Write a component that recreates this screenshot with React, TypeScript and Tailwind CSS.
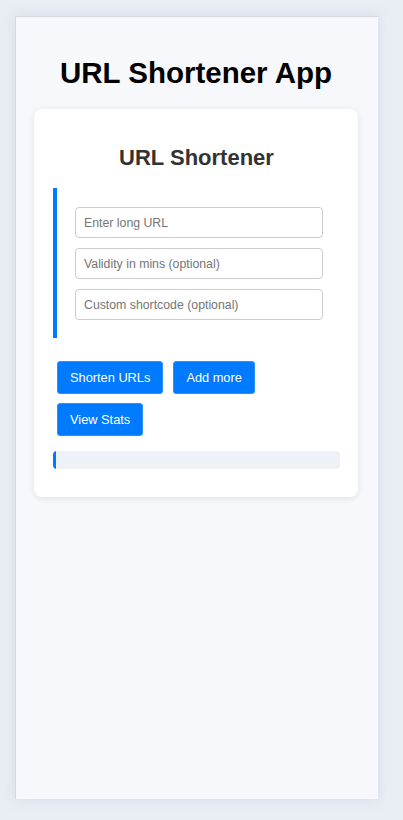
import React from "react";

export default function App() {
  return (
    <div
      className="h-[820px] w-full bg-[#e9edf4] pt-[16px] pl-[15px]"
      style={{ fontFamily: '"Liberation Sans", Arial, sans-serif' }}
    >
      <div className="w-[363px] h-[783px] bg-[#f7f8fc] border-l border-t border-[#d6d9e0] shadow-[0_0_12px_rgba(180,190,210,0.35)] flex flex-col items-center pt-[39px] pr-[2px]">
        <h1 className="text-[29.5px] font-bold text-black leading-[33px]">URL Shortener App</h1>
        <div className="mt-[20px] w-[324px] bg-white rounded-[8px] shadow-[0_1px_6px_rgba(0,0,0,0.1)] pl-[19px] pr-[18px] pt-[36px] pb-[28px]">
          <h2 className="text-[22px] font-bold text-[#333] text-center leading-[25px]">URL Shortener</h2>
          <div className="mt-[18px] border-l-[4px] border-[#007bff] pl-[18px] pr-[17px] pt-[19px] pb-[18px] flex flex-col gap-[10px]">
            <input
              placeholder="Enter long URL"
              className="h-[31px] w-full border border-[#ccc] rounded-[4px] px-[8px] text-[12.3px] placeholder:text-[#757575] outline-none"
            />
            <input
              placeholder="Validity in mins (optional)"
              className="h-[31px] w-full border border-[#ccc] rounded-[4px] px-[8px] text-[12.3px] placeholder:text-[#757575] outline-none"
            />
            <input
              placeholder="Custom shortcode (optional)"
              className="h-[31px] w-full border border-[#ccc] rounded-[4px] px-[8px] text-[12.3px] placeholder:text-[#757575] outline-none"
            />
          </div>
          <div className="mt-[23px] pl-[4px] flex flex-wrap gap-x-[10px] gap-y-[9px]">
            <button className="h-[33px] px-[12px] bg-[#007bff] text-white text-[12.8px] rounded-[3px] border border-[#2f8fff]">
              Shorten URLs
            </button>
            <button className="h-[33px] px-[12px] bg-[#007bff] text-white text-[12.8px] rounded-[3px] border border-[#2f8fff]">
              Add more
            </button>
            <button className="h-[33px] px-[12px] bg-[#007bff] text-white text-[12.8px] rounded-[3px] border border-[#2f8fff]">
              View Stats
            </button>
          </div>
          <div className="mt-[15px] h-[18px] w-full bg-[#eef2f6] rounded-[4px] overflow-hidden flex">
            <div className="w-[3px] h-full bg-[#007bff]" />
          </div>
        </div>
      </div>
    </div>
  );
}
